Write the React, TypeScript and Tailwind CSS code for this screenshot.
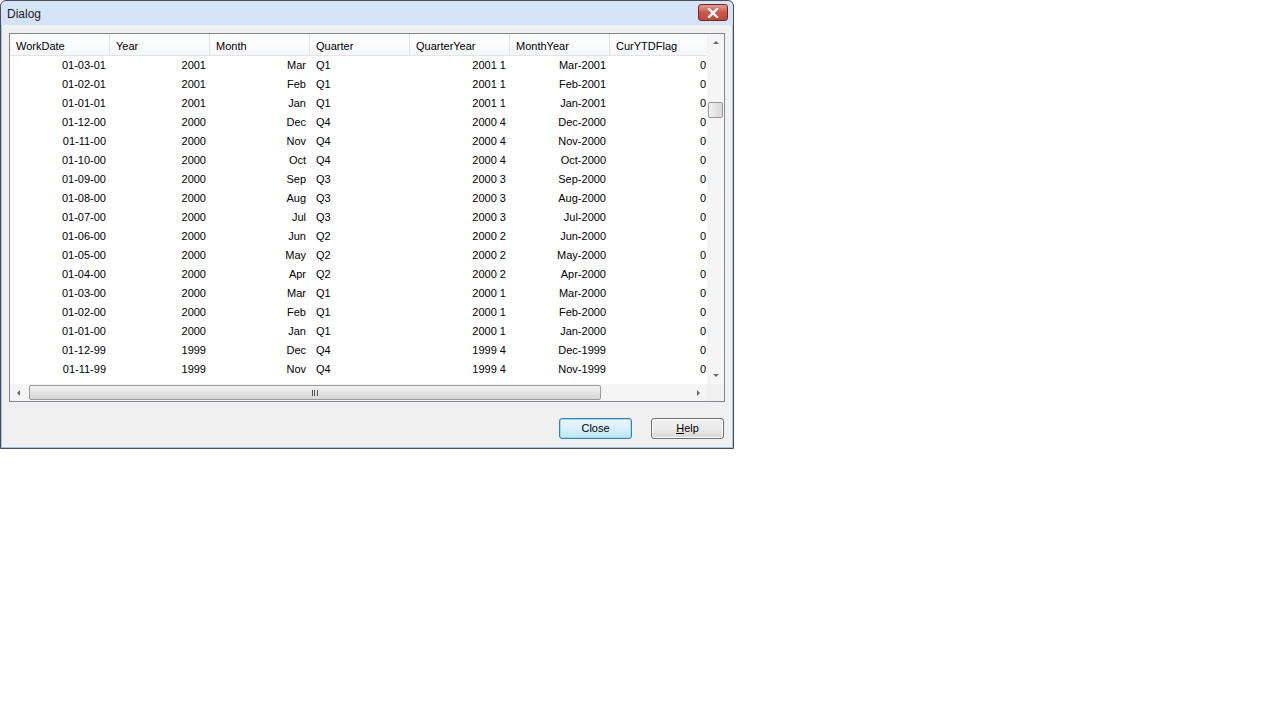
import React from "react";

const MONTHS = ["Jan", "Feb", "Mar", "Apr", "May", "Jun", "Jul", "Aug", "Sep", "Oct", "Nov", "Dec"];

type Row = { date: string; year: string; month: string; q: string; qy: string; my: string; flag: string };

function buildRows(): Row[] {
  const rows: Row[] = [];
  let y = 2001;
  let m = 2; // March, zero based
  for (let i = 0; i < 17; i++) {
    const q = Math.floor(m / 3) + 1;
    rows.push({
      date: `01-${String(m + 1).padStart(2, "0")}-${String(y % 100).padStart(2, "0")}`,
      year: String(y),
      month: MONTHS[m],
      q: `Q${q}`,
      qy: `${y} ${q}`,
      my: `${MONTHS[m]}-${y}`,
      flag: "0",
    });
    m--;
    if (m < 0) {
      m = 11;
      y--;
    }
  }
  return rows;
}

const rows = buildRows();
const headers = ["WorkDate", "Year", "Month", "Quarter", "QuarterYear", "MonthYear", "CurYTDFlag"];

function Cell({ children, left = false }: { children: React.ReactNode; left?: boolean }) {
  return (
    <div className={`w-[100px] shrink-0 h-[19px] leading-[19px] whitespace-nowrap overflow-hidden ${left ? "text-left pl-[6px]" : "text-right pr-[4px]"}`}>
      {children}
    </div>
  );
}

function Arrow({ dir }: { dir: "up" | "down" | "left" | "right" }) {
  const pts = {
    up: "1,4 4,1 7,4",
    down: "1,1 4,4 7,1",
    left: "4,1 1,4 4,7",
    right: "1,1 4,4 1,7",
  }[dir];
  const size = dir === "up" || dir === "down" ? { w: 8, h: 5 } : { w: 5, h: 8 };
  return (
    <svg width={size.w} height={size.h} viewBox={`0 0 ${size.w} ${size.h}`}>
      <polygon points={pts} fill="#6a6a6a" />
    </svg>
  );
}

export default function App() {
  return (
    <div className="w-[1280px] h-[720px] bg-white" style={{ fontFamily: '"Liberation Sans", Arial, sans-serif' }}>
      <div className="w-[734px] h-[449px] flex flex-col border border-[#4a4f57] rounded-t-[6px] bg-gradient-to-b from-[#d5e4f6] to-[#c2d6ef]">
        {/* title bar */}
        <div className="h-[24px] shrink-0 flex items-start justify-between pl-[6px] pr-[5px]">
          <span className="text-[12px] text-[#1e1e1e] pt-[6px] leading-[15px]">Dialog</span>
          <div className="w-[30px] h-[17px] mt-[3px] rounded-[3px] border border-[#6d2a24] bg-gradient-to-b from-[#e29a8c] via-[#c9584a] to-[#c4483a] flex items-center justify-center">
            <svg width="12" height="10" viewBox="0 0 12 10">
              <path d="M2 1 L10 9 M10 1 L2 9" stroke="#ffffff" strokeWidth="2.4" strokeLinecap="square" />
            </svg>
          </div>
        </div>

        {/* client area */}
        <div className="flex-1 border border-t-0 border-[#9cc3e6] bg-[#f0f0f0] flex flex-col pl-[7px] pr-[7px] pt-[8px] text-[11px] text-black">
          {/* grid */}
          <div className="w-[716px] h-[369px] border border-[#828790] bg-white flex flex-col">
            <div className="flex h-[350px]">
              {/* table area */}
              <div className="w-[697px] overflow-hidden flex flex-col">
                <div className="flex h-[22px] shrink-0 border-b border-[#e3e3e3]">
                  {headers.map((h) => (
                    <div key={h} className="w-[100px] shrink-0 pl-[6px] pt-[2px] leading-[20px] border-r border-[#e3e3e3] bg-gradient-to-b from-white to-[#f6f7f9]">
                      {h}
                    </div>
                  ))}
                </div>
                <div className="flex-1 overflow-hidden">
                  {rows.map((r) => (
                    <div key={r.date} className="flex">
                      <Cell>{r.date}</Cell>
                      <Cell>{r.year}</Cell>
                      <Cell>{r.month}</Cell>
                      <Cell left>{r.q}</Cell>
                      <Cell>{r.qy}</Cell>
                      <Cell>{r.my}</Cell>
                      <Cell>{r.flag}</Cell>
                    </div>
                  ))}
                </div>
              </div>
              {/* vertical scrollbar */}
              <div className="w-[17px] bg-[#f5f5f5] flex flex-col items-center">
                <div className="h-[17px] w-full flex items-center justify-center">
                  <Arrow dir="up" />
                </div>
                <div className="flex-1 w-full flex flex-col items-center">
                  <div className="mt-[51px] w-[15px] h-[16px] rounded-[2px] border border-[#9a9a9a] bg-gradient-to-r from-[#f2f2f2] to-[#d8d8d8]" />
                </div>
                <div className="h-[17px] w-full flex items-center justify-center">
                  <Arrow dir="down" />
                </div>
              </div>
            </div>
            {/* horizontal scrollbar */}
            <div className="flex h-[17px]">
              <div className="w-[697px] flex items-center bg-[#f5f5f5]">
                <div className="w-[17px] h-full flex items-center justify-center">
                  <Arrow dir="left" />
                </div>
                <div className="ml-[2px] w-[572px] h-[15px] rounded-[2px] border border-[#9a9a9a] bg-gradient-to-b from-[#f3f3f3] to-[#d6d6d6] flex items-center justify-center gap-[1px]">
                  <div className="w-[1px] h-[6px] bg-[#555]" />
                  <div className="w-[1px] h-[6px] bg-[#555]" />
                  <div className="ml-[1px] w-[1px] h-[6px] bg-[#555]" />
                </div>
                <div className="flex-1" />
                <div className="w-[17px] h-full flex items-center justify-center">
                  <Arrow dir="right" />
                </div>
              </div>
              <div className="w-[17px] bg-[#f0f0f0]" />
            </div>
          </div>

          {/* buttons */}
          <div className="flex justify-end gap-[19px] mt-[16px] mr-[1px]">
            <button className="w-[73px] h-[21px] rounded-[3px] border border-[#3c7fb1] bg-gradient-to-b from-[#eaf6fd] via-[#d9f0fc] to-[#bee6fd] shadow-[inset_0_0_0_1px_#9ddbf5] text-[11px]">
              Close
            </button>
            <button className="w-[73px] h-[21px] rounded-[3px] border border-[#707070] bg-gradient-to-b from-[#f2f2f2] via-[#ebebeb] to-[#d6d6d6] shadow-[inset_0_0_0_1px_#fcfcfc] text-[11px]">
              <span className="underline">H</span>elp
            </button>
          </div>
        </div>
      </div>
    </div>
  );
}
